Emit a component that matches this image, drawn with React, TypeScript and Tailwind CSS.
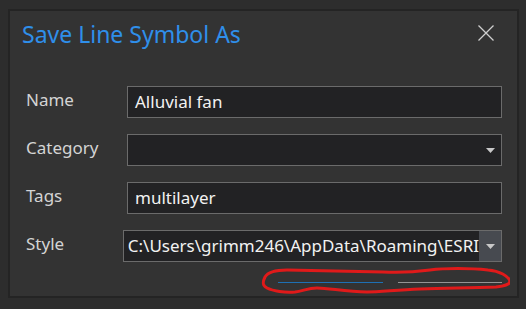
const font = { fontFamily: '"Noto Sans", "Open Sans", sans-serif' };

const Field = ({ label, children }: { label: string; children: React.ReactNode }) => (
  <div className="flex items-center h-8">
    <span className="w-[101px] mb-[4px] text-[17px] text-[#d4d4d4]">{label}</span>
    {children}
  </div>
);

const Arrow = () => (
  <svg width="9" height="5" viewBox="0 0 9 5" className="shrink-0">
    <path d="M0 0h9L4.5 5z" fill="#c8c8c8" />
  </svg>
);

export default function App() {
  return (
    <div className="w-[526px] h-[309px] bg-[#2d2d2d] pt-[9px] pl-2" style={font}>
      <div className="relative w-[511px] h-[289px] bg-[#333333] border-2 border-[#242424] flex flex-col">
        {/* header */}
        <div className="flex items-start justify-between pl-[12px] pr-[23px] h-[50px]">
          <h1 className="mt-[12px] text-[23px] text-[#2f8fea] leading-none">Save Line Symbol As</h1>
          <svg className="mt-[14px]" width="16" height="16" viewBox="0 0 16 16">
            <path d="M0.5 0.5L15.5 15.5M15.5 0.5L0.5 15.5" stroke="#cfcfcf" strokeWidth="1.3" />
          </svg>
        </div>

        {/* form */}
        <div className="flex flex-col gap-4 pl-[16px] pr-[15px] pt-[25px]">
          <Field label="Name">
            <div className="flex-1 h-8 bg-[#222224] border-[1.5px] border-[#6b6b6b] flex items-center px-[7px] text-[17px] text-[#f2f2f2]">
              Alluvial fan
            </div>
          </Field>
          <Field label="Category">
            <div className="flex-1 h-8 bg-[#222224] border-[1.5px] border-[#6b6b6b] flex items-center justify-end pr-[6px]">
              <Arrow />
            </div>
          </Field>
          <Field label="Tags">
            <div className="flex-1 h-8 bg-[#222224] border-[1.5px] border-[#6b6b6b] flex items-center px-[7px] text-[17px] text-[#f2f2f2]">
              multilayer
            </div>
          </Field>
          <Field label="Style">
            <div className="flex-1 h-8 bg-[#222224] border-[1.5px] border-[#6b6b6b] flex items-center text-[17px] text-[#f2f2f2]">
              <span className="flex-1 min-w-0 pl-[4px] whitespace-nowrap overflow-hidden">
                C:\Users\grimm246\AppData\Roaming\ESRI
              </span>
              <div className="w-[22px] h-full bg-[#474a50] flex items-center justify-center">
                <Arrow />
              </div>
            </div>
          </Field>
        </div>

        {/* underline bars */}
        <div className="flex gap-[15px] pl-[268px] pr-[15px] mt-[20px]">
          <div className="w-[105px] h-px bg-[#1e70b4]" />
          <div className="flex-1 h-px bg-[#949494]" />
        </div>

        {/* hand-drawn annotation */}
        <svg className="absolute left-[235px] top-[242px]" width="265" height="45" viewBox="245 253 265 45" fill="none">
          <path
            d="M265 277 C268 272 276 270 287 270 L383 272 C400 273 415 272 430 270 C445 268 470 268 488 270 C500 271 508 276 510 281 C510 285 504 286 496 287 C470 288 450 288 420 289 C395 290 380 292 367 292 C345 292 330 288 317 288 C308 288 303 291 295 292 C285 293 273 291 267 288 C263 286 262 283 265 277 Z"
            stroke="#e01a1a"
            strokeWidth="3"
          />
        </svg>
      </div>
    </div>
  );
}
